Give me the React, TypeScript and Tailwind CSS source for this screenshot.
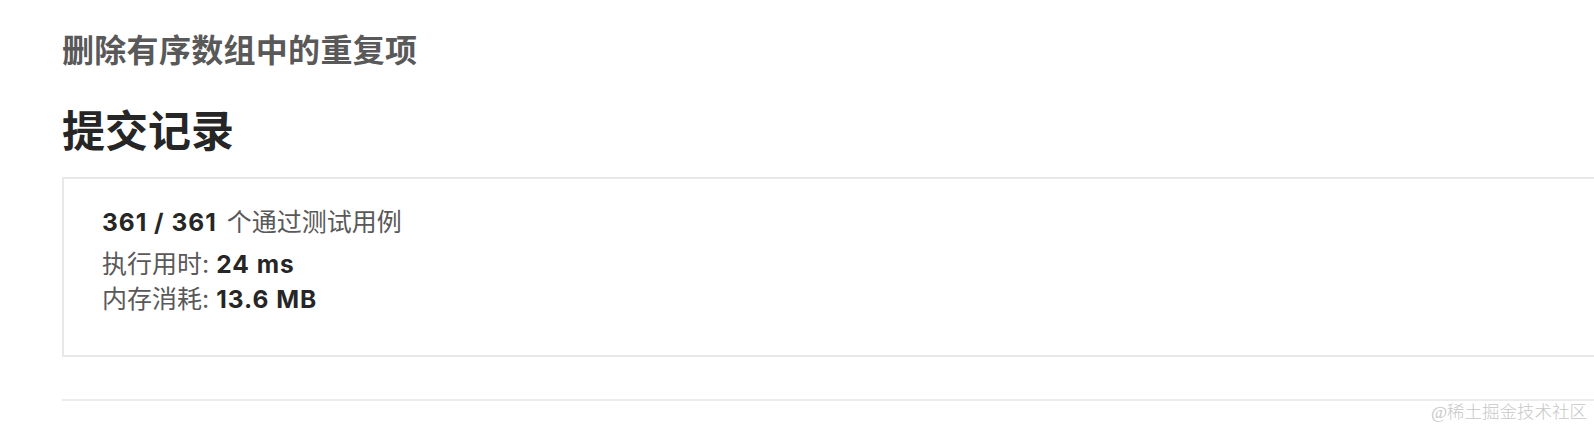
export default function App() {
  return (
    <div
      className="relative w-[1594px] h-[428px] overflow-hidden bg-white"
      style={{ fontFamily: 'Inter, "Noto Sans CJK SC", sans-serif' }}
    >
      <div className="pl-[62px] pt-[31px]">
        {/* 题目标题 */}
        <h2 className="text-[32px] leading-[40px] font-bold text-[#595959] tracking-[0.3px]">
          删除有序数组中的重复项
        </h2>

        <h1 className="mt-[33px] text-[43px] leading-[54px] font-bold text-[#262626]">
          提交记录
        </h1>

        {/* 提交结果卡片 */}
        <div className="mt-[19px] -mr-[20px] border-2 border-[#e8e8e8] pl-[38px] pt-[26px] pb-[38px] text-[25px] leading-[35px] text-[#595959]">
          <div className="mb-[7px]">
            <span className="text-[24.5px] font-bold text-[#262626] tracking-[1px]">361 / 361</span>
            <span className="ml-[10px]">个通过测试用例</span>
          </div>
          <div>
            执行用时: <span className="text-[24.5px] font-bold text-[#262626] tracking-[1px]">24 ms</span>
          </div>
          <div>
            内存消耗: <span className="text-[24.5px] font-bold text-[#262626] tracking-[1px]">13.6 MB</span>
          </div>
        </div>

        <div className="mt-[42px] h-[2px] bg-[#ececec]" />
      </div>

      <div
        className="absolute right-[7px] top-[400px] text-[17.5px] leading-[24px] text-[#c8c8c8] font-light"
        style={{ fontFamily: '"Liberation Serif", "Noto Sans CJK SC", serif' }}
      >
        @稀土掘金技术社区
      </div>
    </div>
  );
}
